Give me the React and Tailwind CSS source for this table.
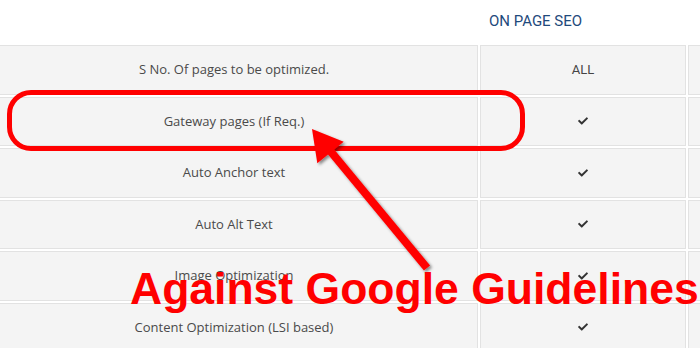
import { FaCheck } from "react-icons/fa"

const rows = [
  ["S No. Of pages to be optimized.", "ALL"],
  ["Gateway pages (If Req.)", null],
  ["Auto Anchor text", null],
  ["Auto Alt Text", null],
  ["Image Optimization", null],
  ["Content Optimization (LSI based)", null],
]

function Cell({ children, className = "" }) {
  return (
    <div className={`flex h-[49.5px] items-center justify-center border border-[#e2e2e2] bg-[#f4f4f4] ${className}`}>
      {children}
    </div>
  )
}

export default function App() {
  return (
    <div className="relative h-[348px] w-[700px] overflow-hidden bg-white">
      <div className="h-[45px] pl-[489px] pt-[10px] font-['Roboto',sans-serif] text-[15px] text-[#1f4a7c]">
        ON PAGE SEO
      </div>
      <div className="ml-[-10px] flex flex-col gap-[2px]">
        {rows.map(([label, val]) => (
          <div key={label} className="grid grid-cols-[488px_206px_200px] gap-[2px]">
            <Cell className="font-['Open_Sans',sans-serif] text-[13px] text-[#4a4a4a]">{label}</Cell>
            <Cell className="font-['Roboto',sans-serif] text-[13px] text-[#444]">
              {val ? val : <FaCheck className="h-[10px] w-[10px] text-[#333]" />}
            </Cell>
            <Cell />
          </div>
        ))}
      </div>

      {/* annotation overlay */}
      <div className="pointer-events-none absolute left-[7px] top-[90px] h-[61px] w-[518px] rounded-[24px] border-[5px] border-[#ff0000]" />
      <svg className="pointer-events-none absolute left-0 top-0" width="700" height="348" viewBox="0 0 700 348">
        <defs>
          <filter id="sh" x="-20%" y="-20%" width="140%" height="140%">
            <feDropShadow dx="2" dy="2" stdDeviation="1.5" floodColor="#000" floodOpacity="0.45" />
          </filter>
        </defs>
        <g filter="url(#sh)" fill="#ff0000">
          <line x1="427" y1="268" x2="327" y2="147" stroke="#ff0000" strokeWidth="8" />
          <polygon points="312,129 343.7,141.7 317.3,163.3" />
        </g>
      </svg>
      <div className="pointer-events-none absolute left-[130px] top-[267px] whitespace-nowrap font-['Liberation_Sans',Arial,sans-serif] text-[44.5px] font-bold leading-none text-[#ff0000]">
        Against Google Guidelines
      </div>
    </div>
  )
}
